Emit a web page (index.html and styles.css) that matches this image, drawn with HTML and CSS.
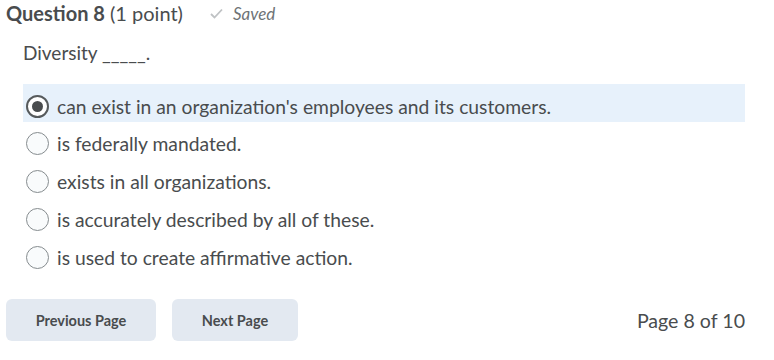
FILE: index.html
```html
<!DOCTYPE html>
<html>
<head>
<meta charset="utf-8">
<link rel="stylesheet" href="styles.css">
</head>
<body>
<div class="page">
  <div class="qhead">
    <h2 class="qtitle"><span class="qnum">Question 8</span> (1 point)</h2>
    <span class="saved">
      <svg class="check" width="13" height="11" viewBox="0 0 13 11"><path d="M1 6 L4.5 9.5 L12 1.5" fill="none" stroke="#bfc2c4" stroke-width="1.8"/></svg>
      <span>Saved</span>
    </span>
  </div>
  <div class="qbody">
    <p class="prompt">Diversity _____.</p>
    <ul class="choices">
      <li class="choice selected"><span class="radio on"></span><span>can exist in an organization's employees and its customers.</span></li>
      <li class="choice"><span class="radio"></span><span>is federally mandated.</span></li>
      <li class="choice"><span class="radio"></span><span>exists in all organizations.</span></li>
      <li class="choice"><span class="radio"></span><span>is accurately described by all of these.</span></li>
      <li class="choice"><span class="radio"></span><span>is used to create affirmative action.</span></li>
    </ul>
  </div>
  <div class="footer">
    <div class="buttons">
      <button class="btn prev">Previous Page</button>
      <button class="btn next">Next Page</button>
    </div>
    <div class="pageinfo">Page 8 of 10</div>
  </div>
</div>
</body>
</html>
```
FILE: styles.css
```css
* { box-sizing: border-box; }
body {
  margin: 0;
  font-family: Lato, "Open Sans", sans-serif;
  color: #494c4e;
  background: #fff;
}
.page { padding: 0 29px 0 6px; }
.qhead {
  display: flex;
  align-items: center;
  height: 26px;
}
.qtitle {
  margin: 0;
  font-size: 20px;
  font-weight: 400;
}
.qnum { font-weight: 700; }
.saved {
  display: flex;
  align-items: center;
  margin-left: 27px;
  font-style: italic;
  font-size: 17px;
  color: #6e7376;
  gap: 10px;
}
.qbody { padding-left: 17px; }
.prompt {
  margin: 14px 0 0;
  font-size: 19px;
  height: 26px;
  line-height: 26px;
}
.choices {
  list-style: none;
  margin: 18px 0 0;
  padding: 0;
}
.choice {
  display: flex;
  align-items: center;
  height: 37.75px;
  padding: 6px 0 0 3px;
  font-size: 19.3px;
  gap: 8px;
}
.choice.selected { background: #e7f1fb; height: 38px; }
.radio {
  width: 23px;
  height: 23px;
  border: 1px solid #868c8f;
  border-radius: 50%;
  background: #f9fbfc;
  display: flex;
  align-items: center;
  justify-content: center;
  flex: none;
}
.radio.on { background: #fff; border: 2px solid #565a5c; }
.radio.on::after {
  content: "";
  width: 11px;
  height: 11px;
  border-radius: 50%;
  background: #494c4e;
}
.footer {
  display: flex;
  align-items: center;
  justify-content: space-between;
  margin-top: 26px;
}
.buttons { display: flex; gap: 16px; }
.btn {
  font-family: Lato, sans-serif;
  font-weight: 700;
  font-size: 14.5px;
  color: #494c4e;
  background: #e3e9f1;
  border: none;
  border-radius: 6px;
  height: 42px;
  padding: 0;
}
.prev { width: 150px; }
.next { width: 126px; }
.pageinfo { font-size: 19.6px; }
```
